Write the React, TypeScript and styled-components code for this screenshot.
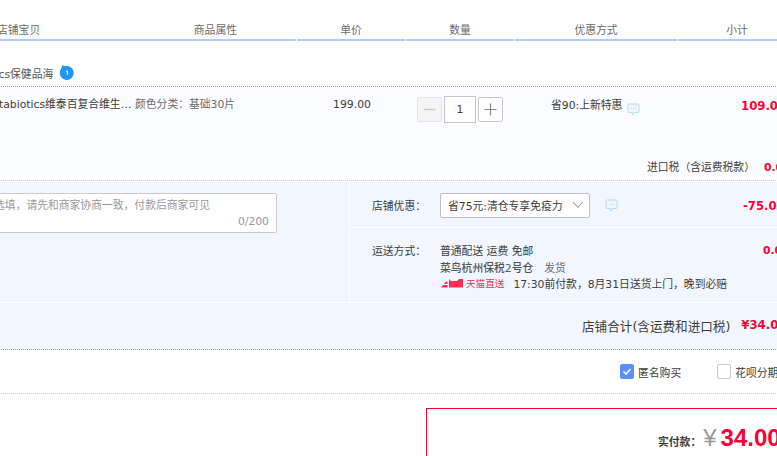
import React from "react";
import styled, { createGlobalStyle } from "styled-components";

const Global = createGlobalStyle`
  html, body { margin: 0; padding: 0; background: #fff; overflow: hidden; }
  body { width: 777px; height: 456px; font-family: "DejaVu Sans", "Noto Sans CJK SC", sans-serif; font-size: 10.8px; color: #3c3c3c; }
`;

const Viewport = styled.div`
  width: 777px;
  height: 456px;
  overflow: hidden;
`;
const Page = styled.div`
  width: 1000px;
  margin-left: -200px;
`;
const HeaderRow = styled.div`
  display: flex;
  gap: 1px;
  height: 41px;
`;
const HeaderCell = styled.div<{ $w: number }>`
  width: ${(p) => p.$w}px;
  flex: none;
  box-sizing: border-box;
  border-bottom: 2px solid #aecdff;
  padding-top: 23px;
  line-height: 16px;
  text-align: center;
  color: #6c6c6c;
`;
const HeaderMain = styled(HeaderCell)`
  display: flex;
  justify-content: space-between;
  padding-left: 197px;
  padding-right: 59px;
`;
const StoreRow = styled.div`
  height: 46px;
  box-sizing: border-box;
  display: flex;
  align-items: flex-end;
  padding-left: 148px;
  padding-bottom: 3px;
  border-bottom: 1px dotted #55a5ff;
  color: #555;
`;
const StoreName = styled.span`
  line-height: 16px;
`;
const Badge = styled.svg`
  width: 15px;
  height: 16px;
  margin: 0 0 3px 6px;
`;
const ItemBlock = styled.div`
  background: #fbfcff;
  border-bottom: 1px dotted #cfcfcf;
  height: 94px;
  box-sizing: border-box;
`;
const ItemRow = styled.div`
  display: flex;
  height: 73px;
  padding-top: 10px;
  box-sizing: border-box;
`;
const TitleCell = styled.div`
  width: 151px;
  margin-left: 183px;
  flex: none;
  padding-top: 1px;
  line-height: 14px;
  white-space: nowrap;
  overflow: hidden;
  text-overflow: ellipsis;
`;
const AttrCell = styled.div`
  width: 164px;
  padding-left: 1px;
  padding-top: 1px;
  box-sizing: border-box;
  flex: none;
  line-height: 14px;
  color: #6c6c6c;
`;
const PriceCell = styled.div`
  width: 108px;
  flex: none;
  text-align: center;
  padding-top: 1px;
  line-height: 14px;
  color: #3c3c3c;
`;
const QtyCell = styled.div`
  width: 109px;
  flex: none;
  box-sizing: border-box;
  padding-left: 11px;
  display: flex;
  align-items: flex-start;
  gap: 2px;
  margin-top: -1px;
`;
const QtyButton = styled.div<{ $disabled?: boolean }>`
  width: 25px;
  height: 25px;
  margin-top: 1px;
  box-sizing: border-box;
  border: 1px solid ${(p) => (p.$disabled ? "#e4e4e4" : "#c8c8d0")};
  border-radius: 2px;
  background: ${(p) => (p.$disabled ? "#f5f5f5" : "#fff")};
  display: flex;
  align-items: center;
  justify-content: center;
`;
const QtyInput = styled.div`
  width: 32px;
  height: 27px;
  box-sizing: border-box;
  border: 1px solid #c4c4cc;
  background: #fff;
  text-align: center;
  line-height: 25px;
  color: #3c3c3c;
`;
const CouponCell = styled.div`
  width: 163px;
  flex: none;
  box-sizing: border-box;
  padding-left: 36px;
  display: flex;
  align-items: flex-start;
  padding-top: 2px;
  line-height: 14px;
`;
const Bubble = styled.svg`
  width: 13px;
  height: 13px;
  margin-left: 5px;
  margin-top: 4px;
  flex: none;
`;
const SubtotalCell = styled.div`
  padding-left: 63px;
  font-weight: 700;
  font-size: 11.7px;
  line-height: 16px;
  color: #ff0036;
  padding-top: 1px;
`;
const TaxRow = styled.div`
  display: flex;
  padding-left: 847px;
  line-height: 16px;
  color: #3c3c3c;
`;
const TaxLabel = styled.span`
  width: 117px;
  flex: none;
`;
const RedStrong = styled.span`
  color: #ff0036;
  font-weight: 700;
`;
const ExtraBlock = styled.div`
  margin-top: 1px;
  background: #f2f7ff;
`;
const ExtraTop = styled.div`
  display: flex;
  height: 120px;
  border-bottom: 1px solid #fff;
`;
const MessageArea = styled.div`
  width: 550px;
  flex: none;
  box-sizing: border-box;
  padding: 11px 72px 0 100px;
  border-right: 1px solid #fff;
`;
const MessageBox = styled.div`
  box-sizing: border-box;
  height: 40px;
  border: 1px solid #cbcbcb;
  border-radius: 2px;
  background: #fff;
  padding: 4px 7px 0 0;
  color: #9a9a9a;
  text-align: right;
`;
const Placeholder = styled.div`
  text-align: left;
  padding-left: 93px;
  line-height: 16px;
  white-space: nowrap;
`;
const Counter = styled.div`
  line-height: 16px;
`;
const OptionColumn = styled.div`
  flex: 1;
  display: flex;
  flex-direction: column;
`;
const CouponRow = styled.div`
  height: 46px;
  box-sizing: border-box;
  border-bottom: 1px solid #fff;
  display: flex;
  align-items: center;
  padding-left: 22px;
  padding-top: 1px;
`;
const OptLabel = styled.div`
  width: 68px;
  flex: none;
  color: #3c3c3c;
`;
const Select = styled.div`
  width: 150px;
  height: 25px;
  box-sizing: border-box;
  border: 1px solid #bbc0cc;
  border-radius: 2px;
  background: #fff;
  display: flex;
  align-items: center;
  padding: 0 5px 0 7px;
  justify-content: space-between;
  white-space: nowrap;
  flex: none;
`;
const CouponBubble = styled(Bubble)`
  margin-left: 15px;
  margin-top: 0;
`;
const CouponValue = styled.span`
  margin-left: 125px;
  padding-top: 2px;
  color: #ff0036;
  font-weight: 700;
  font-size: 11.7px;
  white-space: nowrap;
`;
const DeliveryRow = styled.div`
  display: flex;
  padding: 14px 0 0 22px;
`;
const DeliveryLines = styled.div`
  width: 323px;
  flex: none;
`;
const DeliveryLine = styled.div`
  display: flex;
  align-items: center;
  height: 16.4px;
  white-space: nowrap;
`;
const Warehouse = styled.span`
  color: #555;
  font-weight: 500;
  margin-right: 11px;
`;
const Muted = styled.span`
  color: #6c6c6c;
`;
const TmallText = styled.span`
  color: #ff2d55;
  font-size: 9.6px;
  margin-left: 3px;
  margin-right: 9px;
`;
const Logo = styled.svg`
  width: 22px;
  height: 10px;
  margin-left: 1px;
`;
const DeliveryFee = styled(RedStrong)`
  line-height: 16px;
  margin-top: 1px;
`;
const TotalRow = styled.div`
  height: 47px;
  box-sizing: border-box;
  border-bottom: 1px dotted #6fa4f5;
  display: flex;
  align-items: center;
  padding: 0 0 2px 782px;
  font-size: 12.6px;
  white-space: nowrap;
`;
const TotalValue = styled(RedStrong)`
  margin-left: 11px;
  font-size: 11.7px;
`;
const OptionsRow = styled.div`
  height: 44px;
  box-sizing: border-box;
  border-bottom: 1px dotted #cfcfcf;
  display: flex;
  align-items: center;
  padding-left: 820px;
  white-space: nowrap;
`;
const CheckBox = styled.div<{ $checked?: boolean }>`
  width: 14px;
  height: 15px;
  box-sizing: border-box;
  border-radius: 2px;
  border: 1px solid ${(p) => (p.$checked ? "#5b8ff9" : "#c8c8d0")};
  background: ${(p) => (p.$checked ? "#5b8ff9" : "#fff")};
  display: flex;
  align-items: center;
  justify-content: center;
  margin-right: 4px;
  flex: none;
`;
const OptionText = styled.span<{ $gap?: number }>`
  margin-right: ${(p) => p.$gap ?? 0}px;
`;
const PayBox = styled.div`
  margin: 14px 0 0 626px;
  width: 400px;
  height: 100px;
  box-sizing: border-box;
  border: 1px solid #ff0036;
  padding: 15px 0 0 231px;
  display: flex;
  align-items: baseline;
  white-space: nowrap;
`;
const PayLabel = styled.span`
  font-weight: 700;
  color: #3c3c3c;
`;
const Yen = styled.span`
  font-family: "Liberation Sans", sans-serif;
  font-size: 24px;
  color: #999;
  margin: 0 4px 0 2px;
`;
const PayValue = styled.span`
  font-family: "Liberation Sans", sans-serif;
  font-size: 24px;
  font-weight: 700;
  color: #ff0036;
`;

const ChatIcon = () => (
  <>
    <rect x="1" y="1" width="11" height="8.5" rx="1" fill="#f0f7ff" stroke="#b5dbf7" />
    <path d="M4.5 9.5 L6 12 L8 9.5" fill="#f0f7ff" stroke="#b5dbf7" />
    <path d="M4 5.5h1M6 5.5h1M8 5.5h1" stroke="#b5dbf7" />
  </>
);

export default function App() {
  return (
    <Viewport>
      <Global />
      <Page>
        <HeaderRow>
          <HeaderMain $w={496}>
            <span>店铺宝贝</span>
            <span>商品属性</span>
          </HeaderMain>
          <HeaderCell $w={108}>单价</HeaderCell>
          <HeaderCell $w={108}>数量</HeaderCell>
          <HeaderCell $w={162}>优惠方式</HeaderCell>
          <HeaderCell $w={118}>小计</HeaderCell>
        </HeaderRow>
        <StoreRow>
          <StoreName>Metabiotics保健品海</StoreName>
          <Badge viewBox="0 0 15 16">
            <path d="M3.2 0.4C3.6 1.6 5 2.2 7.5 2A7 7 0 1 1 0.9 7.6C1.3 5.4 3.4 3.6 3.2 0.4Z" fill="#2196f3" />
            <path d="M7 7h1.3v4" stroke="#fff" strokeWidth="0.9" fill="none" />
          </Badge>
        </StoreRow>
        <ItemBlock>
          <ItemRow>
            <TitleCell>Metabiotics维泰百复合维生素片基础营养</TitleCell>
            <AttrCell>颜色分类：基础30片</AttrCell>
            <PriceCell>199.00</PriceCell>
            <QtyCell>
              <QtyButton $disabled>
                <svg width="13" height="13" viewBox="0 0 13 13">
                  <path d="M0.5 6.5h12" stroke="#c9c9c9" strokeWidth="1.4" />
                </svg>
              </QtyButton>
              <QtyInput>1</QtyInput>
              <QtyButton>
                <svg width="13" height="13" viewBox="0 0 13 13">
                  <path d="M0.5 6.5h12M6.5 0.5v12" stroke="#8a8a8a" strokeWidth="1.2" />
                </svg>
              </QtyButton>
            </QtyCell>
            <CouponCell>
              <span>省90:上新特惠</span>
              <Bubble viewBox="0 0 13 13">
                <ChatIcon />
              </Bubble>
            </CouponCell>
            <SubtotalCell>109.00</SubtotalCell>
          </ItemRow>
          <TaxRow>
            <TaxLabel>进口税（含运费税款）</TaxLabel>
            <RedStrong>0.00</RedStrong>
          </TaxRow>
        </ItemBlock>
        <ExtraBlock>
          <ExtraTop>
            <MessageArea>
              <MessageBox>
                <Placeholder>选填，请先和商家协商一致，付款后商家可见</Placeholder>
                <Counter>0/200</Counter>
              </MessageBox>
            </MessageArea>
            <OptionColumn>
              <CouponRow>
                <OptLabel>店铺优惠：</OptLabel>
                <Select>
                  <span>省75元:清仓专享免疫力</span>
                  <svg width="12" height="8" viewBox="0 0 12 8">
                    <path d="M1 1l5 5.5L11 1" fill="none" stroke="#8d8d8d" />
                  </svg>
                </Select>
                <CouponBubble viewBox="0 0 13 13">
                  <ChatIcon />
                </CouponBubble>
                <CouponValue>-75.00</CouponValue>
              </CouponRow>
              <DeliveryRow>
                <OptLabel>运送方式：</OptLabel>
                <DeliveryLines>
                  <DeliveryLine>普通配送 运费 免邮</DeliveryLine>
                  <DeliveryLine>
                    <Warehouse>菜鸟杭州保税2号仓</Warehouse>
                    <Muted>发货</Muted>
                  </DeliveryLine>
                  <DeliveryLine>
                    <Logo viewBox="0 0 22 10">
                      <path d="M0 9.5l2-2.5h4.5v2.5zM2.5 6l3-2.5h1V6zM8 1l2 2h6l2-2h4v8.5H8z" fill="#ff2d55" />
                    </Logo>
                    <TmallText>天猫直送</TmallText>
                    <span>17:30前付款，8月31日送货上门，晚到必赔</span>
                  </DeliveryLine>
                </DeliveryLines>
                <DeliveryFee>0.00</DeliveryFee>
              </DeliveryRow>
            </OptionColumn>
          </ExtraTop>
          <TotalRow>
            <span>店铺合计(含运费和进口税)</span>
            <TotalValue>¥34.00</TotalValue>
          </TotalRow>
        </ExtraBlock>
        <OptionsRow>
          <CheckBox $checked>
            <svg width="10" height="9" viewBox="0 0 10 9">
              <path d="M1.5 4.5l2.5 2.5 4.5-5" fill="none" stroke="#fff" strokeWidth="1.6" />
            </svg>
          </CheckBox>
          <OptionText $gap={36}>匿名购买</OptionText>
          <CheckBox />
          <OptionText>花呗分期</OptionText>
        </OptionsRow>
        <PayBox>
          <PayLabel>实付款：</PayLabel>
          <Yen>¥</Yen>
          <PayValue>34.00</PayValue>
        </PayBox>
      </Page>
    </Viewport>
  );
}
